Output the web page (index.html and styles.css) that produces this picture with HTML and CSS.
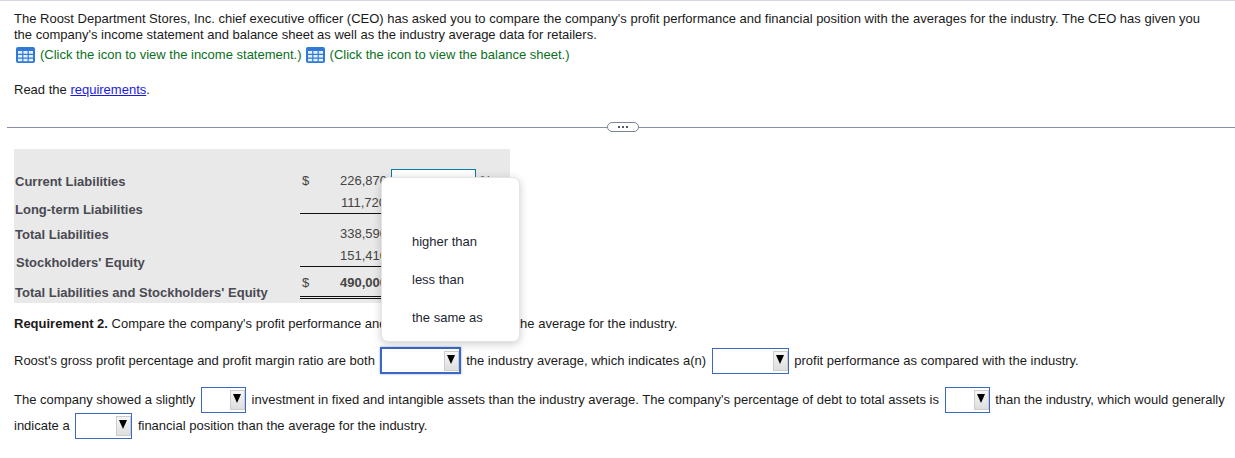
FILE: index.html
```html
<!DOCTYPE html>
<html lang="en">
<head>
<meta charset="utf-8">
<title>Roost Department Stores</title>
<link rel="stylesheet" href="styles.css">
</head>
<body>
<main class="page">
  <section class="intro">
    <p class="lead">The Roost Department Stores, Inc. chief executive officer (CEO) has asked you to compare the company's profit performance and financial position with the averages for the industry. The CEO has given you the company's income statement and balance sheet as well as the industry average data for retailers.</p>
    <p class="links">
      <svg class="grid-icon" viewBox="0 0 19 16" aria-hidden="true"><rect width="19" height="16" rx="2" fill="#2f7ad6"/><path d="M2 4h4.2v2.8H2zM7.4 4h4.2v2.8H7.4zM12.8 4H17v2.8h-4.2zM2 8h4.2v2.6H2zM7.4 8h4.2v2.6H7.4zM12.8 8H17v2.6h-4.2zM2 11.8h4.2v2.4H2zM7.4 11.8h4.2v2.4H7.4zM12.8 11.8H17v2.4h-4.2z" fill="#e6f0fb"/></svg>
      <span class="hint">(Click the icon to view the income statement.)</span>
      <svg class="grid-icon" viewBox="0 0 19 16" aria-hidden="true"><rect width="19" height="16" rx="2" fill="#2f7ad6"/><path d="M2 4h4.2v2.8H2zM7.4 4h4.2v2.8H7.4zM12.8 4H17v2.8h-4.2zM2 8h4.2v2.6H2zM7.4 8h4.2v2.6H7.4zM12.8 8H17v2.6h-4.2zM2 11.8h4.2v2.4H2zM7.4 11.8h4.2v2.4H7.4zM12.8 11.8H17v2.4h-4.2z" fill="#e6f0fb"/></svg>
      <span class="hint">(Click the icon to view the balance sheet.)</span>
    </p>
    <p class="read">Read the <a href="#req">requirements</a>.</p>
  </section>

  <div class="divider">
    <span class="rule rule-left"></span>
    <span class="pill"><i></i><i></i><i></i></span>
    <span class="rule rule-right"></span>
  </div>

  <section class="sheet">
    <div class="labels">
      <div class="label">Current Liabilities</div>
      <div class="label">Long-term Liabilities</div>
      <div class="label">Total Liabilities</div>
      <div class="label label-nudge">Stockholders' Equity</div>
      <div class="label label-last">Total Liabilities and Stockholders' Equity</div>
    </div>
    <div class="figures">
      <div class="fig fig-a"><span class="cur">$</span><span class="val">226,870</span><span class="answer"></span><span class="pct">%</span></div>
      <div class="fig fig-b"><span class="cur"></span><span class="val">111,720</span></div>
      <div class="fig fig-c"><span class="cur"></span><span class="val">338,590</span></div>
      <div class="fig fig-b"><span class="cur"></span><span class="val">151,410</span></div>
      <div class="fig fig-e"><span class="cur">$</span><span class="val strong">490,000</span></div>
    </div>
  </section>

  <section class="answers">
    <p class="req"><b>Requirement 2.</b> Compare the company's profit performance and financial position with the average for the industry.</p>
    <p class="row row-one">Roost's gross profit percentage and profit margin ratio are both <span class="sel sel-focus"><span class="arrow"></span></span> the industry average, which indicates a(n) <span class="sel sel-77"><span class="arrow"></span></span> profit performance as compared with the industry.</p>
    <p class="row row-two">The company showed a slightly <span class="sel sel-45"><span class="arrow"></span></span> investment in fixed and intangible assets than the industry average. The company's percentage of debt to total assets is <span class="sel sel-45"><span class="arrow"></span></span> than the industry, which would generally indicate a <span class="sel sel-57"><span class="arrow"></span></span> financial position than the average for the industry.</p>
  </section>

  <div class="menu">
    <div class="opt">higher than</div>
    <div class="opt">less than</div>
    <div class="opt">the same as</div>
  </div>
</main>
</body>
</html>
```
FILE: styles.css
```css
* { box-sizing: border-box; }
html, body { margin: 0; padding: 0; background: #fff; }
body {
  font-family: "Liberation Sans", Arial, sans-serif;
  font-size: 13px;
  line-height: 16px;
  color: #1a1a1a;
}
p { margin: 0; }
.page {
  position: relative;
  width: 1235px;
  height: 458px;
  overflow: hidden;
  border-top: 1px solid #d3d8e2;
}
.intro { padding: 10px 22px 0 14px; }
.links { display: flex; align-items: center; height: 16px; margin-top: 4px; padding-left: 2px; }
.hint { color: #0b6f1e; margin-left: 5px; margin-right: 4px; }
.grid-icon { width: 19px; height: 16px; flex: none; }
.read { margin-top: 19px; }
.read a { color: #1a1ae0; }
.divider { display: flex; align-items: center; height: 10px; margin-top: 24px; margin-left: 7px; }
.rule { height: 1px; background: #8a90a3; }
.rule-left { flex: 0 0 600px; }
.rule-right { flex: 1; }
.pill {
  flex: 0 0 32px;
  height: 10px;
  border: 1px solid #7b8499;
  border-radius: 5px;
  display: flex;
  align-items: center;
  justify-content: center;
  gap: 2px;
}
.pill i { width: 2px; height: 2px; background: #50586a; }

.sheet {
  display: flex;
  width: 496px;
  height: 154px;
  margin: 17px 0 0 14px;
  background: #e9e9e9;
  color: #444;
}
.labels {
  flex: 0 0 286px;
  padding: 19px 0 0 1px;
  display: grid;
  grid-template-rows: 28px 28px 22px 34px 24px;
  align-items: center;
  font-weight: bold;
  color: #4a4a52;
}
.label-nudge { padding-left: 1px; }
.label-last { padding-top: 2px; }
.figures { flex: 1; padding-top: 20px; }
.fig { display: flex; width: 86px; position: relative; }
.fig-a { height: 22px; padding-top: 1px; align-items: center; }
.fig-b { height: 23px; padding-top: 1px; align-items: center; border-bottom: 1px solid #111; }
.fig-c { height: 30px; padding-top: 9px; align-items: center; }
.fig-e { height: 32px; padding-top: 3px; align-items: center; border-bottom: 3px double #111; }
.cur { flex: 0 0 40px; padding-left: 2px; }
.val { flex: 1; text-align: right; }
.strong { font-weight: bold; }
.answer {
  position: absolute;
  left: 91px;
  top: 0;
  width: 85px;
  height: 22px;
  background: #fff;
  border: 1px solid #0a7a9e;
}
.pct { position: absolute; left: 180px; top: 4px; }

.answers { padding: 0 8px 0 14px; }
.req { margin-top: 13px; }
.row { line-height: 26px; }
.row-one { margin-top: 16px; }
.row-two { margin-top: 13px; }
.sel {
  display: inline-flex;
  justify-content: flex-end;
  align-items: center;
  vertical-align: top;
  height: 26px;
  margin: 0 2px 0 2px;
  background: #fff;
  border: 1px solid #3a68c4;
}
.sel-focus {
  width: 81px;
  height: 27px;
  margin-top: -1px;
  margin-left: 1px;
  border-width: 2px;
  box-shadow: 0 0 2px rgba(58, 104, 196, 0.6);
}
.sel-77 { width: 77px; }
.sel-45 { width: 45px; }
.sel-57 { width: 57px; }
.arrow {
  position: relative;
  width: 15px;
  height: 20px;
  background: linear-gradient(#f6f6f6, #dedede);
  border: 1px solid #cdcdcd;
}
.arrow::after {
  content: "";
  position: absolute;
  left: 2px;
  top: 3px;
  border-left: 4.5px solid transparent;
  border-right: 4.5px solid transparent;
  border-top: 9px solid #000;
}

.menu {
  position: absolute;
  left: 381px;
  top: 176px;
  width: 139px;
  height: 165px;
  padding: 45px 0 0 30px;
  background: #fff;
  border: 1px solid #e4e4e4;
  border-radius: 7px;
  box-shadow: 0 2px 8px rgba(0, 0, 0, 0.2);
  color: #1c2733;
}
.opt { height: 38px; line-height: 38px; }
```
